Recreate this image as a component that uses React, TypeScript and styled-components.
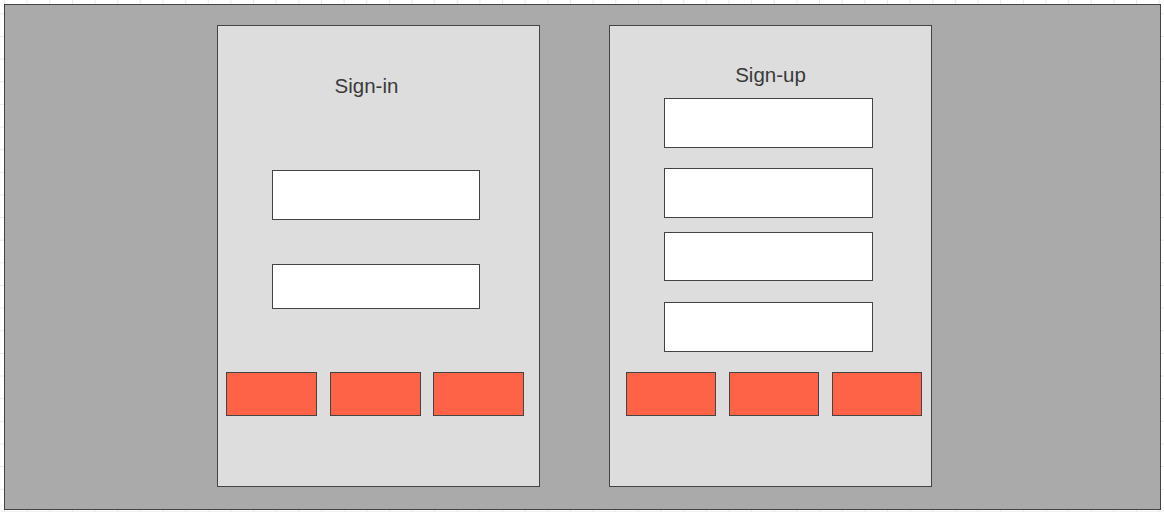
import React from "react";
import styled, { createGlobalStyle } from "styled-components";

const GlobalStyle = createGlobalStyle`
  html, body {
    margin: 0;
    padding: 0;
    min-height: 512px;
    background-color: #ffffff;
    background-image:
      linear-gradient(to right, #e8e8e8 1px, transparent 1px),
      linear-gradient(to bottom, #e8e8e8 1px, transparent 1px);
    background-size: 22.65px 22.65px;
    background-position: 4px -9.35px;
    font-family: "Liberation Sans", Arial, sans-serif;
  }
`;

const Canvas = styled.div`
  box-sizing: border-box;
  margin: 4px 0 0 4px;
  width: 1157px;
  height: 506px;
  background: #aaaaaa;
  border: 1px solid #444444;
  display: flex;
  align-items: flex-start;
  gap: 69px;
  padding: 20px 0 0 212px;
`;

const Card = styled.section`
  box-sizing: border-box;
  width: 323px;
  height: 462px;
  background: #dddddd;
  border: 1px solid #444444;
  display: flex;
  flex-direction: column;
  align-items: flex-start;
`;

const Title = styled.h2<{ top: number; shift?: number }>`
  align-self: stretch;
  margin: ${({ top }) => top}px 0 0 0;
  padding-right: ${({ shift = 0 }) => shift}px;
  font-size: 20.5px;
  line-height: 24px;
  font-weight: 400;
  color: #3a3a3a;
  text-align: center;
`;

const Field = styled.input<{ top: number; h: number; w: number }>`
  box-sizing: border-box;
  display: block;
  margin: ${({ top }) => top}px 0 0 54px;
  width: ${({ w }) => w}px;
  height: ${({ h }) => h}px;
  padding: 0 8px;
  background: #ffffff;
  border: 1px solid #444444;
  border-radius: 0;
  outline: none;
  font-family: inherit;
  font-size: 14px;
`;

const ButtonRow = styled.div<{ top: number; left: number; gap: number }>`
  display: flex;
  gap: ${({ gap }) => gap}px;
  margin: ${({ top }) => top}px 0 0 ${({ left }) => left}px;
`;

const Action = styled.button<{ w: number }>`
  box-sizing: border-box;
  width: ${({ w }) => w}px;
  height: 44px;
  padding: 0;
  background: #ff6347;
  border: 1px solid #444444;
  border-radius: 0;
  cursor: pointer;
`;

export default function App() {
  return (
    <>
      <GlobalStyle />
      <Canvas>
        <Card>
          <Title top={48} shift={24}>Sign-in</Title>
          <Field top={72} h={50} w={208} aria-label="Email" />
          <Field top={44} h={45} w={208} aria-label="Password" type="password" />
          <ButtonRow top={63} left={8} gap={12.5}>
            <Action w={91} aria-label="Login" />
            <Action w={91} aria-label="Forgot" />
            <Action w={91} aria-label="Cancel" />
          </ButtonRow>
        </Card>
        <Card>
          <Title top={37}>Sign-up</Title>
          <Field top={11} h={50} w={209} aria-label="Name" />
          <Field top={20} h={50} w={209} aria-label="Email" />
          <Field top={14} h={49} w={209} aria-label="Password" type="password" />
          <Field top={21} h={50} w={209} aria-label="Confirm password" type="password" />
          <ButtonRow top={20} left={16} gap={13}>
            <Action w={90} aria-label="Register" />
            <Action w={90} aria-label="Reset" />
            <Action w={90} aria-label="Cancel" />
          </ButtonRow>
        </Card>
      </Canvas>
    </>
  );
}
